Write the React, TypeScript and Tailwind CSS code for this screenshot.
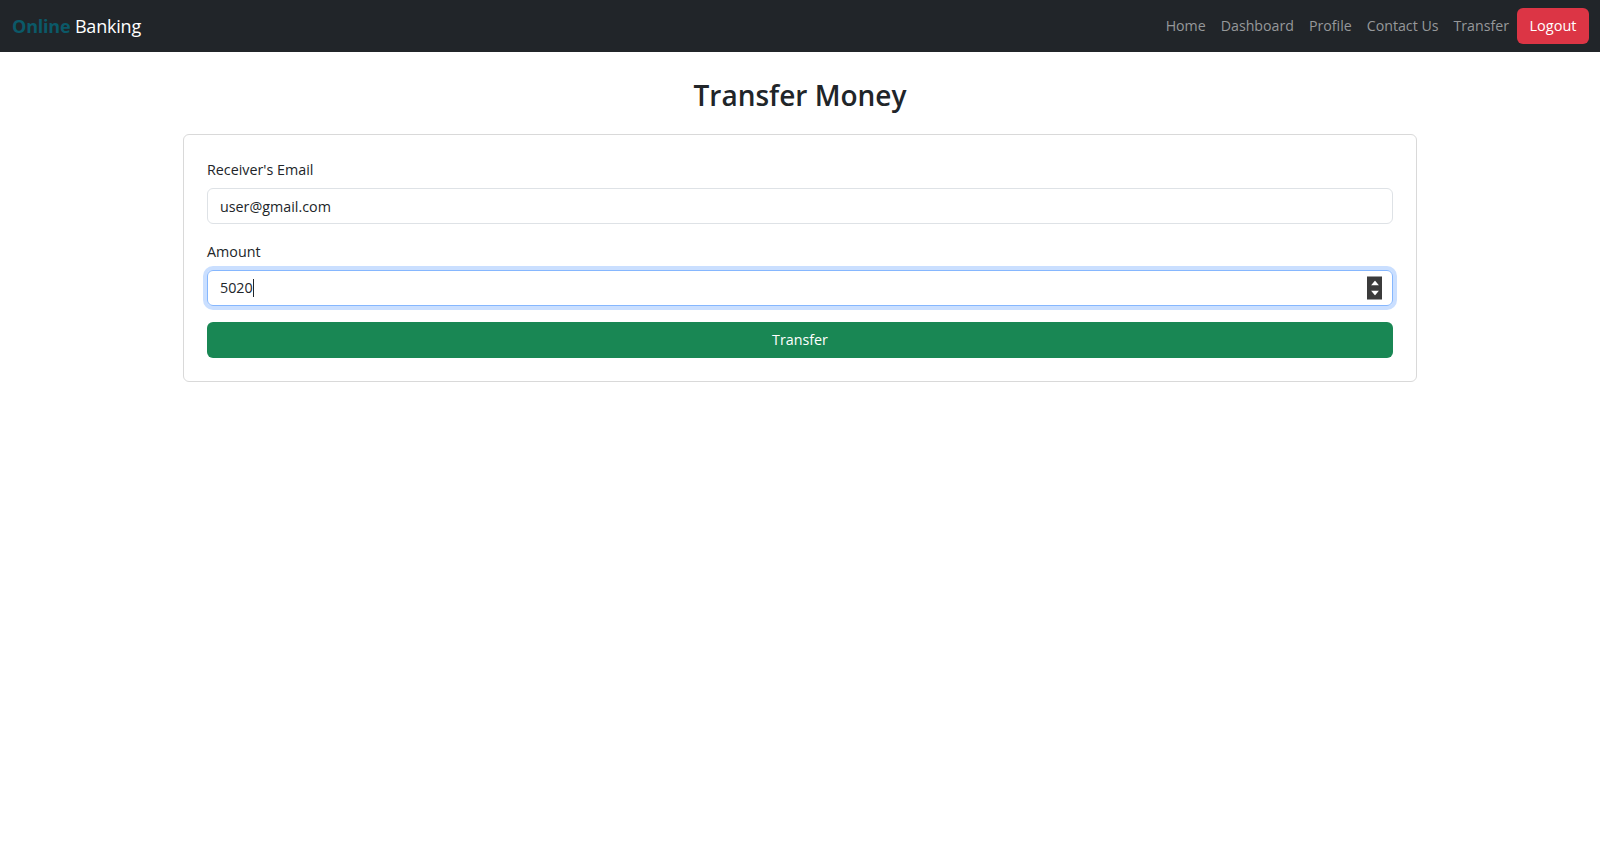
import { useState } from "react";

const navLinks = ["Home", "Dashboard", "Profile", "Contact Us", "Transfer"];

function Spinner() {
    return (
        <div className="absolute right-[10px] top-1/2 -translate-y-1/2 w-[15px] h-[23px] bg-[#3b3b3b] flex flex-col items-center justify-center gap-[5px]">
            <svg width="8" height="5" viewBox="0 0 8 5">
                <path d="M0 5 L4 0 L8 5 Z" fill="#ffffff" />
            </svg>
            <svg width="8" height="5" viewBox="0 0 8 5">
                <path d="M0 0 L4 5 L8 0 Z" fill="#ffffff" />
            </svg>
        </div>
    );
}

export default function App() {
    const [email] = useState("user@gmail.com");
    const [amount] = useState("5020");

    return (
        <div className="min-h-screen bg-white font-['Open_Sans',sans-serif] text-[#212529]">
            <nav className="h-[52px] bg-[#212529] flex items-center justify-between pl-[12px] pr-[11px]">
                <a className="text-[18px] tracking-[-0.2px]">
                    <span className="font-bold text-[#0b5968]">Online</span>{" "}
                    <span className="text-white">Banking</span>
                </a>
                <div className="flex items-center">
                    <ul className="flex items-center gap-[15px] text-[14.2px] text-[#96989a] mr-[8px]">
                        {navLinks.map((link) => (
                            <li key={link}>{link}</li>
                        ))}
                    </ul>
                    <button className="h-[36px] w-[72px] rounded-[6px] bg-[#dc3545] text-white text-[14.5px]">
                        Logout
                    </button>
                </div>
            </nav>

            <main className="flex flex-col items-center">
                <h2 className="mt-[25px] mb-[21px] text-[28px] leading-[36px] font-semibold text-[#212529]">
                    Transfer Money
                </h2>

                <div className="w-[1234px] border border-[#d9d9d9] rounded-[6px] p-[23px]">
                    <label className="block text-[14.3px] leading-[23px] mb-[7px]">Receiver's Email</label>
                    <input
                        className="block w-full h-[36px] px-[12px] text-[14.3px] border border-[#dee2e6] rounded-[6px] outline-none mb-[16px]"
                        value={email}
                        readOnly
                    />

                    <label className="block text-[14.3px] leading-[23px] mb-[7px]">Amount</label>
                    <div className="relative h-[36px] px-[12px] flex items-center text-[14.3px] border border-[#86b7fe] rounded-[6px] shadow-[0_0_0_4px_rgba(13,110,253,0.22)] mb-[16px]">
                        <span>{amount}</span>
                        <span className="w-px h-[18px] bg-[#212529]" />
                        <Spinner />
                    </div>

                    <button className="w-full h-[36px] rounded-[6px] bg-[#198754] text-white text-[14.3px]">
                        Transfer
                    </button>
                </div>
            </main>
        </div>
    );
}
